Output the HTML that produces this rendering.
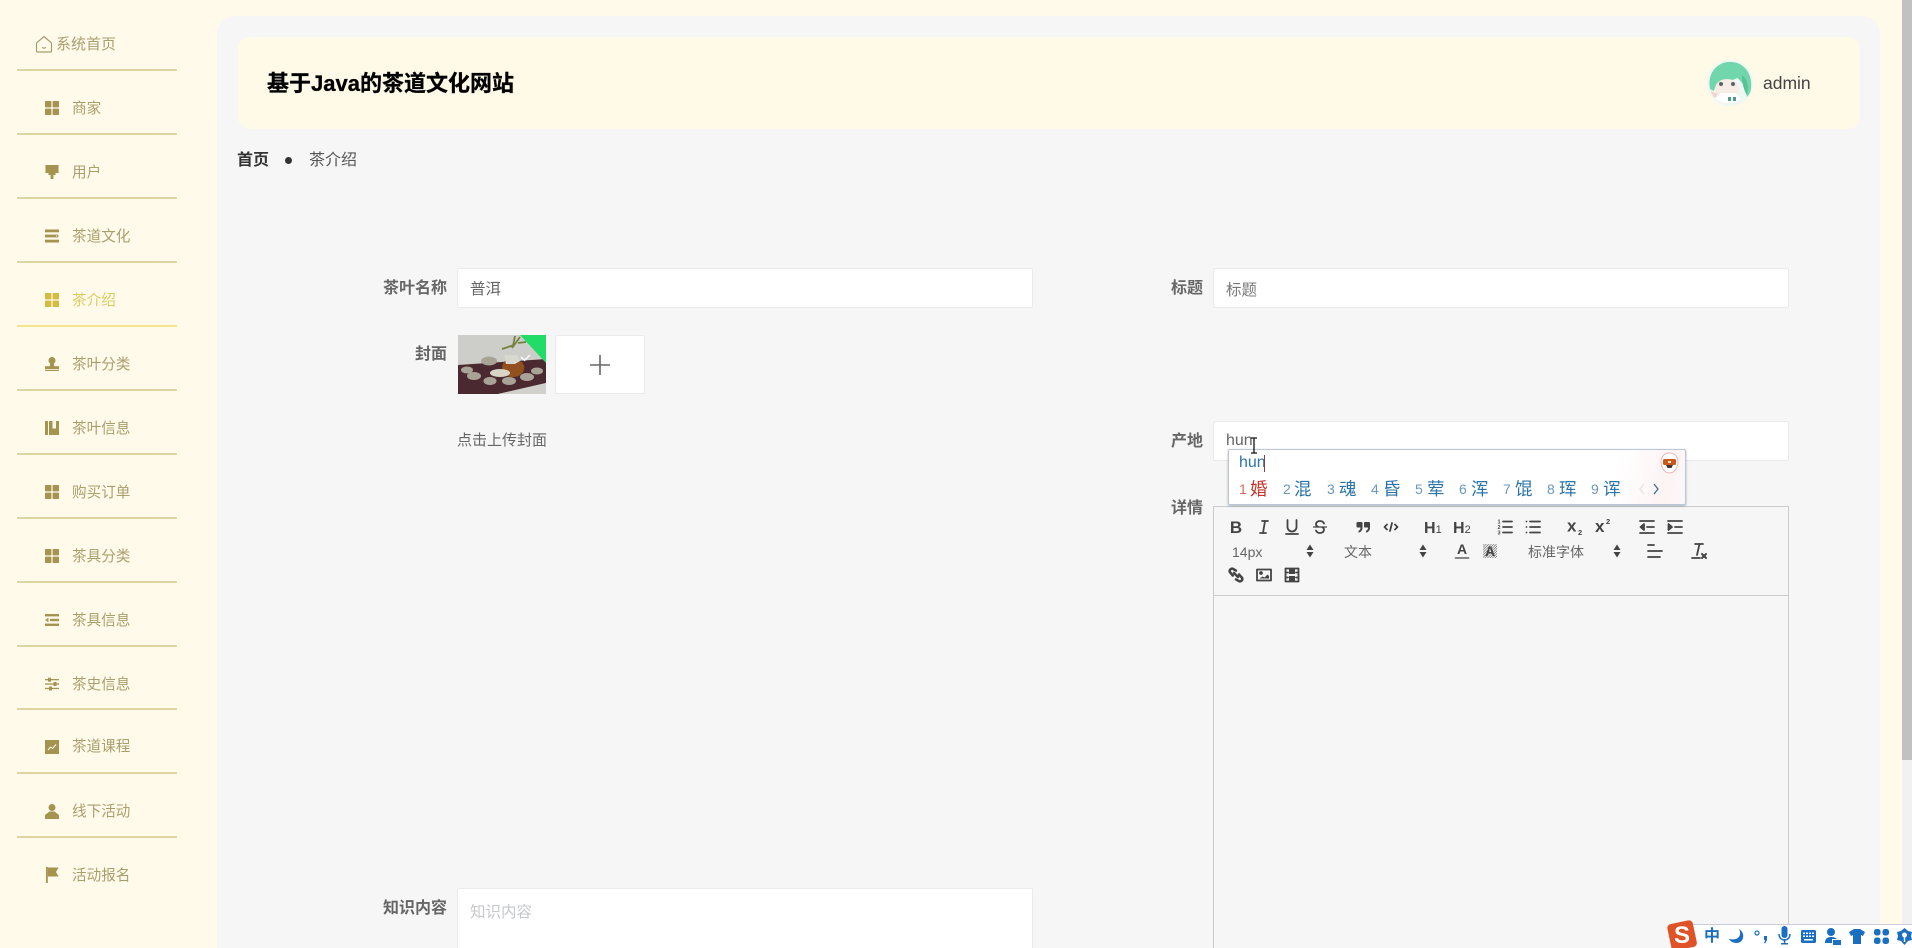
<!DOCTYPE html>
<html lang="zh"><head><meta charset="utf-8"><title>基于Java的茶道文化网站</title>
<style>
html,body{margin:0;padding:0;width:1912px;height:948px;overflow:hidden;background:#fffaea}
body{position:relative;font-family:"Liberation Sans","Noto Sans CJK SC",sans-serif;color:#606266}
div,span,svg{position:absolute;display:block}
.t{line-height:20px;white-space:nowrap}
.n{left:72px;font-size:14.6px;color:#aa9f6c}
.a{color:#dccb60}
.l{left:17px;width:160px;height:2px;background:#dfd5a2}
.ic{left:45px;width:14px;height:14px;fill:#a5944f;margin-top:-1px}
.lb{width:120px;text-align:right;font-size:16px;font-weight:700;color:#666;line-height:22px}
.in{background:#fff;border:1px solid #eaeaea;box-sizing:border-box;border-radius:2px}
.v{font-size:15.5px;line-height:20px;color:#666;white-space:nowrap}
.q{width:18px;height:18px;margin:2px 0 0 2px;fill:none;stroke:#444;stroke-width:1.8;stroke-linecap:round;stroke-linejoin:round}
.q text{font-family:"Liberation Sans",sans-serif;fill:#444;stroke:none;font-weight:700}
.sel{font-size:14px;line-height:20px;color:#666;white-space:nowrap}
.ar{width:8px;height:14px;fill:#444}
.num{font-size:14px;line-height:20px;color:#6b97bd;top:479px}
.ch{font-size:17.5px;line-height:24px;color:#2a74aa;top:477px;font-family:"Liberation Sans","Noto Sans CJK SC",sans-serif}
.tr{fill:#1b6fc2}
</style></head><body>

<!-- main panel -->
<div style="left:217px;top:16px;width:1663px;height:940px;background:#f6f6f6;border-radius:18px 18px 0 0"></div>
<!-- scrollbar -->
<div style="left:1902px;top:0;width:10px;height:948px;background:#f1f1f1"></div>
<div style="left:1902px;top:0;width:10px;height:760px;background:#c1c1c1"></div>

<!-- sidebar -->
<svg style="left:35px;top:35px;width:18px;height:18px;fill:none;stroke:#a79c6e;stroke-width:1.2" viewBox="0 0 18 18"><path d="M9 1.500 16.500 8v8a1 1 0 0 1-1 1h-13a1 1 0 0 1-1-1V8z"/><path d="M7 12.500q2 1.200 4 0"/></svg>
<div class="t" style="left:56px;top:35px;font-size:15px;color:#a89e70">系统首页</div>
<div class="l" style="top:69px"></div>

<svg class="ic" style="top:102px" viewBox="0 0 14 14"><rect width="6.400" height="6.400" rx=".6"/><rect x="7.600" width="6.400" height="6.400" rx=".6"/><rect y="7.600" width="6.400" height="6.400" rx=".6"/><rect x="7.600" y="7.600" width="6.400" height="6.400" rx=".6"/></svg>
<div class="t n" style="top:99px">商家</div><div class="l" style="top:133px"></div>

<svg class="ic" style="top:166px" viewBox="0 0 14 14"><rect x=".5" width="13" height="8"/><rect x="3.500" y="8" width="7" height="2"/><rect x="5.600" y="10" width="2.800" height="4"/></svg>
<div class="t n" style="top:163px">用户</div><div class="l" style="top:197px"></div>

<svg class="ic" style="top:230px" viewBox="0 0 14 14"><rect y="0.500" width="14" height="2.800"/><rect y="5.600" width="11" height="2.800"/><path d="M11.500 4.800 14 7l-2.500 2.200z"/><rect y="10.700" width="14" height="2.800"/></svg>
<div class="t n" style="top:227px">茶道文化</div><div class="l" style="top:261px"></div>

<svg class="ic" style="top:294px;fill:#d3bc3f" viewBox="0 0 14 14"><rect width="6.400" height="6.400" rx=".6"/><rect x="7.600" width="6.400" height="6.400" rx=".6"/><rect y="7.600" width="6.400" height="6.400" rx=".6"/><rect x="7.600" y="7.600" width="6.400" height="6.400" rx=".6"/></svg>
<div class="t n a" style="top:291px">茶介绍</div><div class="l" style="top:325px;background:#f1e58e"></div>

<svg class="ic" style="top:358px" viewBox="0 0 14 14"><circle cx="7" cy="3.500" r="3.500"/><path d="M5.200 6h3.600l.5 3.200H14V12H0V9.200h4.700z"/><rect y="12.800" width="14" height="1.200"/></svg>
<div class="t n" style="top:355px">茶叶分类</div><div class="l" style="top:389px"></div>

<svg class="ic" style="top:422px" viewBox="0 0 14 14"><rect width="3" height="14"/><rect x="4" width="3.500" height="14"/><path d="M7.500 7.500H11V0h3v14H7.500z"/></svg>
<div class="t n" style="top:419px">茶叶信息</div><div class="l" style="top:453px"></div>

<svg class="ic" style="top:486px" viewBox="0 0 14 14"><rect width="6.400" height="6.400" rx=".6"/><rect x="7.600" width="6.400" height="6.400" rx=".6"/><rect y="7.600" width="6.400" height="6.400" rx=".6"/><rect x="7.600" y="7.600" width="6.400" height="6.400" rx=".6"/></svg>
<div class="t n" style="top:483px">购买订单</div><div class="l" style="top:517px"></div>

<svg class="ic" style="top:550px" viewBox="0 0 14 14"><rect width="6.400" height="6.400" rx=".6"/><rect x="7.600" width="6.400" height="6.400" rx=".6"/><rect y="7.600" width="6.400" height="6.400" rx=".6"/><rect x="7.600" y="7.600" width="6.400" height="6.400" rx=".6"/></svg>
<div class="t n" style="top:547px">茶具分类</div><div class="l" style="top:581px"></div>

<svg class="ic" style="top:614px" viewBox="0 0 14 14"><rect y="1" width="14" height="2.400"/><rect x="5" y="5.800" width="9" height="2.400"/><path d="M3.500 4.800V9.200L0 7z"/><rect y="10.600" width="14" height="2.400"/></svg>
<div class="t n" style="top:611px">茶具信息</div><div class="l" style="top:645px"></div>

<svg class="ic" style="top:678px" viewBox="0 0 14 14"><rect y="2" width="14" height="1.300"/><rect x="3" y="0.700" width="3" height="4"/><rect y="6.400" width="14" height="1.300"/><rect x="8.500" y="5" width="3" height="4"/><rect y="10.800" width="14" height="1.300"/><rect x="4" y="9.500" width="3" height="4"/></svg>
<div class="t n" style="top:675px">茶史信息</div><div class="l" style="top:708px"></div>

<svg class="ic" style="top:741px" viewBox="0 0 14 14"><rect width="14" height="14"/><path d="M3 10l2.500-3 2 1.500L11 4.500" fill="none" stroke="#fffaea" stroke-width="1"/></svg>
<div class="t n" style="top:737px">茶道课程</div><div class="l" style="top:772px"></div>

<svg class="ic" style="top:805px;height:15px" viewBox="0 0 14 15"><circle cx="7" cy="3.500" r="3.500"/><path d="M4.500 7.500h5L14 11v4H0v-4z"/></svg>
<div class="t n" style="top:802px">线下活动</div><div class="l" style="top:836px"></div>

<svg class="ic" style="top:868px;height:16px;width:14px" viewBox="0 0 14 16"><rect x="1" width="1.800" height="16"/><path d="M2.800 .5H13.500L11 5l2.500 4.500H2.800z"/></svg>
<div class="t n" style="top:866px">活动报名</div>

<!-- header -->
<div style="left:238px;top:37px;width:1622px;height:92px;background:#fff9e8;border-radius:12px"></div>
<div class="t" style="left:267px;top:70px;font-size:22px;line-height:28px;font-weight:700;color:#000;-webkit-text-stroke:.3px #000">基于Java的茶道文化网站</div>
<svg style="left:1706px;top:59px;width:48px;height:48px" viewBox="0 0 48 48"><circle cx="24" cy="24" r="23" fill="#eef8f2"/><path d="M4 30C1 14 11 4 22 3c12-1 22 7 23 20 1 7-1 12-4 15-1-9-5-16-10-19-5 3-12 4-17 4-3 2-5 4-6 9z" fill="#72d6ac"/><path d="M36 16c5 4 7 10 5 20-3-4-5-12-5-20z" fill="#55c394"/><ellipse cx="21" cy="30" rx="12" ry="10" fill="#f7ece6"/><circle cx="15" cy="25" r="2" fill="#56656a"/><circle cx="27" cy="25" r="2" fill="#56656a"/><path d="M9 39c6 6 18 7 26 1l-5-6H15z" fill="#fff"/><path d="M22 38h3v4h-3zM27 38h3v4h-3z" fill="#4f9c88"/><path d="M5 31c2 3 5 3 7 3l-2 5c-3-1-5-4-5-8z" fill="#f4d3d3"/></svg>
<div class="t" style="left:1763px;top:72px;font-size:17.500px;line-height:22px;color:#444">admin</div>

<!-- breadcrumb -->
<div class="t" style="left:237px;top:151px;font-size:16px;font-weight:700;color:#333">首页</div>
<div style="left:285px;top:157px;width:7px;height:7px;border-radius:50%;background:#333"></div>
<div class="t" style="left:309px;top:151px;font-size:16px;color:#555">茶介绍</div>

<!-- form left -->
<div class="t lb" style="left:327px;top:278px">茶叶名称</div>
<div class="in" style="left:457px;top:268px;width:576px;height:40px"></div>
<div class="v" style="left:470px;top:280px">普洱</div>

<div class="t lb" style="left:327px;top:344px">封面</div>
<svg style="left:458px;top:335px;width:88px;height:59px" viewBox="0 0 88 59">
<rect width="88" height="59" fill="#cdcdca"/>
<path d="M0 30 88 24V48L40 59H0z" fill="#4a2a30"/>
<path d="M40 59 88 48V59z" fill="#d2d0cc"/>
<path d="M44 34c0-7 4-10 9-10s12 2 13 7c1 6-3 11-11 11-6 0-11-3-11-8z" fill="#93501f"/>
<path d="M46 20h13l3 6-5 3H48z" fill="#d9d8d0"/>
<path d="M44 14 56 10M54 13 62 2M55 11l2-10M60 8l8-1" stroke="#75823c" stroke-width="1.800" fill="none"/>
<g fill="#a9a297"><ellipse cx="31" cy="26" rx="8" ry="4.500"/><ellipse cx="9" cy="35" rx="6" ry="3.500"/><ellipse cx="16" cy="41" rx="7" ry="4"/><ellipse cx="32" cy="46" rx="6.500" ry="4"/><ellipse cx="51" cy="46" rx="7" ry="4"/><ellipse cx="69" cy="42" rx="7" ry="4"/><ellipse cx="79" cy="36" rx="6" ry="3.500"/></g>
<ellipse cx="42" cy="38" rx="10" ry="4" fill="#d8d4c8"/>
<path d="M62 0H88V28z" fill="#22dc68"/>
<path d="M63 22l3.500 3.500L72 20" fill="none" stroke="#fff" stroke-width="1.300"/>
</svg>
<div class="in" style="left:555px;top:335px;width:90px;height:59px"></div>
<svg style="left:590px;top:355px;width:20px;height:20px" viewBox="0 0 20 20"><path d="M10 0v20M0 10h20" stroke="#666" stroke-width="1.600"/></svg>
<div class="t" style="left:457px;top:431px;font-size:15px;color:#666">点击上传封面</div>

<div class="t lb" style="left:327px;top:898px">知识内容</div>
<div class="in" style="left:457px;top:888px;width:576px;height:80px"></div>
<div class="v" style="left:470px;top:903px;color:#c6c8cc">知识内容</div>

<!-- form right -->
<div class="t lb" style="left:1083px;top:278px">标题</div>
<div class="in" style="left:1213px;top:268px;width:576px;height:40px"></div>
<div class="v" style="left:1226px;top:281px;color:#777">标题</div>

<div class="t lb" style="left:1083px;top:431px">产地</div>
<div class="in" style="left:1213px;top:421px;width:576px;height:40px"></div>
<div class="v" style="left:1226px;top:431px;font-size:16px">hun</div>

<div class="t lb" style="left:1083px;top:498px">详情</div>

<!-- editor -->
<div style="left:1213px;top:506px;width:576px;height:460px;border:1px solid #ccc;box-sizing:border-box"></div>
<div style="left:1213px;top:595px;width:576px;height:1px;background:#ccc"></div>

<svg class="q" style="left:1225px;top:516px" viewBox="0 0 18 18"><text x="9" y="15" font-size="17" text-anchor="middle">B</text></svg>
<svg class="q" style="left:1253px;top:516px" viewBox="0 0 18 18"><line x1="7" x2="13" y1="3" y2="3"/><line x1="5" x2="11" y1="15" y2="15"/><line x1="8" x2="10" y1="15" y2="3"/></svg>
<svg class="q" style="left:1281px;top:516px" viewBox="0 0 18 18"><path d="M4.500 2v7a4.500 4.500 0 0 0 9 0V2"/><line x1="3" x2="15" y1="16" y2="16"/></svg>
<svg class="q" style="left:1309px;top:516px" viewBox="0 0 18 18"><line x1="2.500" x2="15.500" y1="9" y2="9" stroke-width="1.200"/><path d="M13 5.500C12.400 4 10.700 3 9 3 6.800 3 5 4.300 5 6.200c0 1 .8 2 2 2.500M5 12.500C5.600 14 7.300 15 9 15c2.200 0 4-1.300 4-3.200 0-1-.6-2-1.700-2.500"/></svg>
<svg class="q" style="left:1352px;top:516px;fill:#444;stroke:none" viewBox="0 0 18 18"><rect x="2.500" y="4" width="6" height="5.500" rx="1"/><path d="M6.500 7h2v2.500c0 3-1.500 4.500-4 5.200V12.800c1.200-.4 2-1.300 2-3z"/><rect x="10" y="4" width="6" height="5.500" rx="1"/><path d="M14 7h2v2.500c0 3-1.500 4.500-4 5.200V12.800c1.200-.4 2-1.300 2-3z"/></svg>
<svg class="q" style="left:1380px;top:516px" viewBox="0 0 18 18"><polyline points="5 6.500 2.500 9 5 11.500"/><polyline points="13 6.500 15.500 9 13 11.500"/><line x1="10" x2="8" y1="5" y2="13"/></svg>
<svg class="q" style="left:1422px;top:516px" viewBox="0 0 18 18"><text x="0" y="15" font-size="16" font-weight="400" stroke-width=".2">H<tspan font-size="11" font-weight="400">1</tspan></text></svg>
<svg class="q" style="left:1451px;top:516px" viewBox="0 0 18 18"><text x="0" y="15" font-size="16" font-weight="400">H<tspan font-size="11" font-weight="400">2</tspan></text></svg>
<svg class="q" style="left:1494px;top:516px" viewBox="0 0 18 18"><line x1="7" x2="16" y1="3.500" y2="3.500"/><line x1="7" x2="16" y1="9" y2="9"/><line x1="7" x2="16" y1="14.500" y2="14.500"/><text x="1.500" y="5.500" font-size="5.500">1</text><text x="1.500" y="11" font-size="5.500">2</text><text x="1.500" y="16.500" font-size="5.500">3</text></svg>
<svg class="q" style="left:1522px;top:516px" viewBox="0 0 18 18"><line x1="6" x2="16" y1="3.500" y2="3.500"/><line x1="6" x2="16" y1="9" y2="9"/><line x1="6" x2="16" y1="14.500" y2="14.500"/><line x1="2.500" x2="2.500" y1="3.500" y2="3.500"/><line x1="2.500" x2="2.500" y1="9" y2="9"/><line x1="2.500" x2="2.500" y1="14.500" y2="14.500"/></svg>
<svg class="q" style="left:1565px;top:516px" viewBox="0 0 18 18"><text x="0" y="13.500" font-size="17">x</text><text x="11" y="17" font-size="7.500" font-weight="400">2</text></svg>
<svg class="q" style="left:1593px;top:516px" viewBox="0 0 18 18"><text x="0" y="14" font-size="17">x</text><text x="11" y="6" font-size="7.500" font-weight="400">2</text></svg>
<svg class="q" style="left:1636px;top:516px" viewBox="0 0 18 18"><line x1="2" x2="16" y1="15" y2="15"/><line x1="2" x2="16" y1="3" y2="3"/><line x1="9" x2="16" y1="9" y2="9"/><path d="M6 6 2.500 9 6 12z" fill="#444"/></svg>
<svg class="q" style="left:1664px;top:516px" viewBox="0 0 18 18"><line x1="2" x2="16" y1="15" y2="15"/><line x1="2" x2="16" y1="3" y2="3"/><line x1="9" x2="16" y1="9" y2="9"/><path d="M2.500 6 6 9 2.500 12z" fill="#444"/></svg>

<div class="sel" style="left:1232px;top:542px">14px</div>
<svg class="ar" style="left:1306px;top:544px" viewBox="0 0 8 14"><path d="M4 .5 7.500 6H.5zM4 13.500 .5 8h7z"/></svg>
<div class="sel" style="left:1344px;top:542px">文本</div>
<svg class="ar" style="left:1419px;top:544px" viewBox="0 0 8 14"><path d="M4 .5 7.500 6H.5zM4 13.500 .5 8h7z"/></svg>
<svg class="q" style="left:1451px;top:540px" viewBox="0 0 18 18"><text x="9" y="12" font-size="14" text-anchor="middle">A</text><line x1="2.500" x2="15.500" y1="16" y2="16" stroke="#777"/></svg>
<svg class="q" style="left:1479px;top:540px" viewBox="0 0 18 18"><defs><pattern id="h" width="2.500" height="2.500" patternUnits="userSpaceOnUse"><path d="M0 2.500 2.500 0" stroke="#444" stroke-width=".6"/></pattern></defs><rect x="2" y="2" width="14" height="14" fill="url(#h)" stroke="none"/><text x="9" y="14" font-size="14" text-anchor="middle">A</text></svg>
<div class="sel" style="left:1528px;top:542px">标准字体</div>
<svg class="ar" style="left:1613px;top:544px" viewBox="0 0 8 14"><path d="M4 .5 7.500 6H.5zM4 13.500 .5 8h7z"/></svg>
<svg class="q" style="left:1644px;top:540px" viewBox="0 0 18 18"><line x1="2" x2="16" y1="9" y2="9"/><line x1="2" x2="14" y1="15" y2="15"/><line x1="2" x2="8" y1="3" y2="3"/></svg>
<svg class="q" style="left:1688px;top:540px" viewBox="0 0 18 18"><line x1="5" x2="13" y1="2" y2="2"/><line x1="9.500" x2="7" y1="2" y2="13"/><line x1="2" x2="10" y1="16" y2="16"/><path d="M12 12l4 4M16 12l-4 4" stroke-width="2"/></svg>

<svg class="q" style="left:1225px;top:564px" viewBox="0 0 18 18"><line x1="7" x2="11" y1="7" y2="11" stroke-width="2.500"/><path d="M8.900 4.600 6 2.800a2.500 2.500 0 0 0-3.200 3.200l3 3.500" stroke-width="2.500"/><path d="M9 13.400l3 1.800a2.500 2.500 0 0 0 3.200-3.200L12 8.500" stroke-width="2.500"/></svg>
<svg class="q" style="left:1253px;top:564px" viewBox="0 0 18 18"><rect x="2" y="3.500" width="14" height="11"/><circle cx="6" cy="7" r="1" fill="#444"/><path d="M4.500 12.500l3-2 2 1 3-3 1.500 1.500v2.500z" fill="#444" stroke="none"/></svg>
<svg class="q" style="left:1281px;top:564px" viewBox="0 0 18 18"><rect x="2.500" y="2.500" width="13" height="13"/><rect x="6" y="3" width="6" height="5" fill="#444" stroke="none"/><rect x="6" y="10" width="6" height="5" fill="#444" stroke="none"/><line x1="3" x2="5" y1="6.500" y2="6.500"/><line x1="3" x2="5" y1="11.500" y2="11.500"/><line x1="13" x2="15" y1="6.500" y2="6.500"/><line x1="13" x2="15" y1="11.500" y2="11.500"/></svg>

<!-- IME panel -->
<div style="left:1228px;top:449px;width:458px;height:56px;background:linear-gradient(100deg,#fff 84%,#fdf4f4 95%,#fdf6f8);border:1px solid #b9c7d6;box-sizing:border-box;border-radius:2px;box-shadow:0 1px 2px rgba(90,110,130,.5)"></div>
<div class="t" style="left:1239px;top:453px;font-size:16px;color:#2e74aa">hun</div>
<div style="left:1264px;top:455px;width:1px;height:17px;background:#8f3d3d"></div>
<span class="num" style="left:1239px;color:#d9695f">1</span><span class="ch" style="left:1250px;color:#c5342a">婚</span>
<span class="num" style="left:1283px">2</span><span class="ch" style="left:1294px">混</span>
<span class="num" style="left:1327px">3</span><span class="ch" style="left:1339px">魂</span>
<span class="num" style="left:1371px">4</span><span class="ch" style="left:1383px">昏</span>
<span class="num" style="left:1415px">5</span><span class="ch" style="left:1427px">荤</span>
<span class="num" style="left:1459px">6</span><span class="ch" style="left:1471px">浑</span>
<span class="num" style="left:1503px">7</span><span class="ch" style="left:1515px">馄</span>
<span class="num" style="left:1547px">8</span><span class="ch" style="left:1559px">珲</span>
<span class="num" style="left:1591px">9</span><span class="ch" style="left:1603px">诨</span>
<svg style="left:1638px;top:483px;width:8px;height:12px" viewBox="0 0 8 12"><path d="M6 1 2 6l4 5" fill="none" stroke="#dfe5ea" stroke-width="1.300"/></svg>
<svg style="left:1652px;top:483px;width:8px;height:12px" viewBox="0 0 8 12"><path d="M2 1l4 5-4 5" fill="none" stroke="#3a6a93" stroke-width="1.300"/></svg>
<svg style="left:1660px;top:452px;width:19px;height:22px" viewBox="0 0 19 22"><path d="M9.500 1C4 1 1 5 1 10c0 6 4 11 8.500 11S18 16 18 10c0-5-3-9-8.500-9z" fill="#fff" stroke="#e4a8a8" stroke-width=".8"/><rect x="3" y="7" width="13" height="6" rx="1.500" fill="#c9581e"/><path d="M6 13h7l-1.500 3h-4z" fill="#4a3428"/><rect x="8" y="9" width="3" height="2" fill="#f6e6b0"/></svg>

<!-- mouse cursor -->
<svg style="left:1250px;top:437px;width:8px;height:17px" viewBox="0 0 8 17"><path d="M1 1h6M4 1v15M1 16h6" stroke="#111" stroke-width="1.300" fill="none"/></svg>

<!-- tray -->
<div style="left:1690px;top:924px;width:222px;height:24px;background:#fff;border-top:1px solid #ccd;box-sizing:border-box"></div>
<svg style="left:1666px;top:919px;width:34px;height:29px" viewBox="0 0 34 29"><rect x="3" y="3" width="26" height="27" rx="4" transform="rotate(-12 16 16)" fill="#df5326"/><text x="16" y="24" font-family="Liberation Sans,sans-serif" font-size="24" font-weight="700" text-anchor="middle" fill="#fff">S</text></svg>
<div class="t" style="left:1704px;top:926px;font-size:16px;font-weight:700;color:#1b6fc2;line-height:22px">中</div>
<svg class="tr" style="left:1728px;top:928px;width:16px;height:17px" viewBox="0 0 16 17"><path d="M11 1c3 6 0 12-10 10 3 5 12 6 14-1 1-4-1-7-4-9z"/></svg>
<svg class="tr" style="left:1754px;top:930px;width:14px;height:14px" viewBox="0 0 14 14"><circle cx="3" cy="3" r="2" fill="none" stroke="#1b6fc2" stroke-width="1.200"/><path d="M10 6h3v3c0 2-1 3.500-2.500 4.500l-.5-1c.8-.5 1-1.500 1-2.500h-1z"/></svg>
<svg class="tr" style="left:1778px;top:926px;width:13px;height:20px" viewBox="0 0 13 20"><rect x="3.500" y="0" width="6" height="12" rx="3"/><path d="M1 8c0 8 11 8 11 0" fill="none" stroke="#1b6fc2" stroke-width="1.500"/><rect x="5.800" y="13" width="1.500" height="4"/><rect x="3" y="17" width="7" height="1.500"/></svg>
<svg class="tr" style="left:1801px;top:930px;width:15px;height:13px" viewBox="0 0 15 13"><rect width="15" height="13" rx="1.500"/><g fill="#fff"><rect x="2" y="2.500" width="2" height="1.500"/><rect x="5" y="2.500" width="2" height="1.500"/><rect x="8" y="2.500" width="2" height="1.500"/><rect x="11" y="2.500" width="2" height="1.500"/><rect x="2" y="5.500" width="2" height="1.500"/><rect x="5" y="5.500" width="2" height="1.500"/><rect x="8" y="5.500" width="2" height="1.500"/><rect x="11" y="5.500" width="2" height="1.500"/><rect x="3" y="9" width="9" height="1.500"/></g></svg>
<svg class="tr" style="left:1825px;top:928px;width:16px;height:17px" viewBox="0 0 16 17"><circle cx="6" cy="4" r="4"/><path d="M0 15c0-5 3-6 6-6s5 1 6 2H7v4z"/><rect x="8" y="12" width="8" height="5" fill="#1b6fc2"/></svg>
<svg class="tr" style="left:1849px;top:929px;width:16px;height:15px" viewBox="0 0 16 15"><path d="M5 0H11l5 3-2 4-2-1v9H4V6L2 7 0 3z"/></svg>
<svg class="tr" style="left:1874px;top:929px;width:15px;height:15px" viewBox="0 0 15 15"><rect width="6.500" height="6.500" rx="2.500"/><rect x="8.500" width="6.500" height="6.500" rx="2.500"/><rect y="8.500" width="6.500" height="6.500" rx="2.500"/><rect x="8.500" y="8.500" width="6.500" height="6.500" rx="2.500"/></svg>
<svg class="tr" style="left:1897px;top:928px;width:15px;height:17px" viewBox="0 0 15 17"><path d="M7.500 0 11 3l4 1-1 4 1 4-4 1-3.500 4L4 13l-4-1 1-4-1-4 4-1z"/><circle cx="7.500" cy="7" r="2.500" fill="#fff"/><rect x="6.800" y="8" width="1.400" height="6" fill="#fff"/></svg>

</body></html>
